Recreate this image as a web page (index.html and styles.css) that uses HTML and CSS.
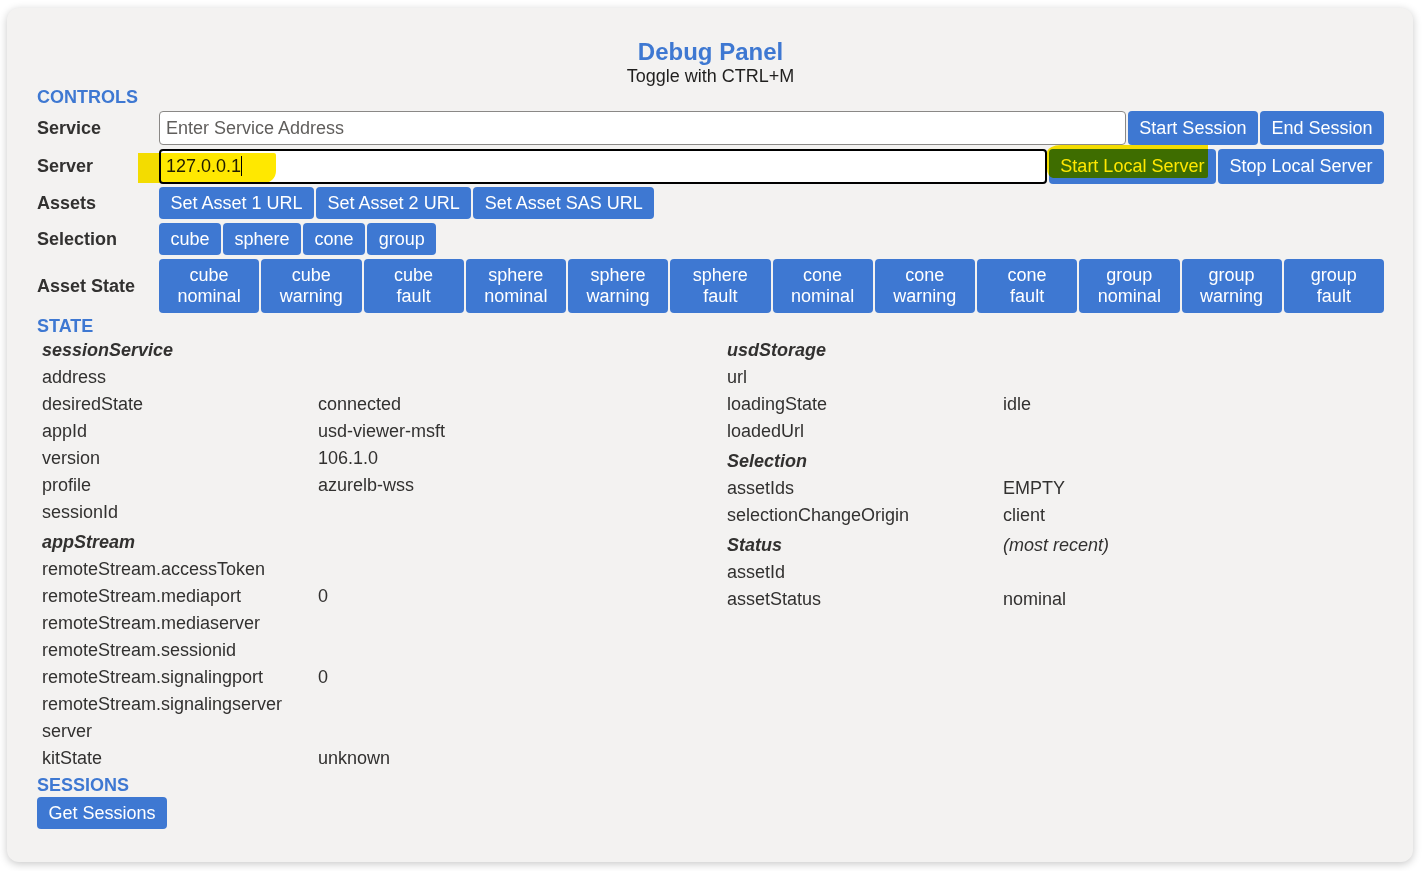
FILE: index.html
```html
<!DOCTYPE html>
<html lang="en">
<head>
<meta charset="utf-8">
<title>Debug Panel</title>
<link rel="stylesheet" href="styles.css">
</head>
<body>
<div class="panel">
  <div class="title">Debug Panel</div>
  <div class="subtitle">Toggle with CTRL+M</div>

  <div class="heading">CONTROLS</div>
  <div class="controls">
    <div class="label">Service</div>
    <div class="row tall">
      <input class="field" type="text" placeholder="Enter Service Address">
      <button class="btn">Start Session</button>
      <button class="btn">End Session</button>
    </div>

    <div class="label">Server</div>
    <div class="row annotated">
      <input class="field focused" type="text" value="127.0.0.1">
      <button class="btn">Start Local Server</button>
      <button class="btn">Stop Local Server</button>
      <span class="caret"></span>
      <span class="mark mark-input"></span>
      <span class="mark mark-button"></span>
    </div>

    <div class="label">Assets</div>
    <div class="row">
      <button class="btn">Set Asset 1 URL</button>
      <button class="btn">Set Asset 2 URL</button>
      <button class="btn">Set Asset SAS URL</button>
    </div>

    <div class="label">Selection</div>
    <div class="row">
      <button class="btn">cube</button>
      <button class="btn">sphere</button>
      <button class="btn">cone</button>
      <button class="btn">group</button>
    </div>

    <div class="label">Asset State</div>
    <div class="row states">
      <button class="btn two">cube<br>nominal</button>
      <button class="btn two">cube<br>warning</button>
      <button class="btn two">cube<br>fault</button>
      <button class="btn two">sphere<br>nominal</button>
      <button class="btn two">sphere<br>warning</button>
      <button class="btn two">sphere<br>fault</button>
      <button class="btn two">cone<br>nominal</button>
      <button class="btn two">cone<br>warning</button>
      <button class="btn two">cone<br>fault</button>
      <button class="btn two">group<br>nominal</button>
      <button class="btn two">group<br>warning</button>
      <button class="btn two">group<br>fault</button>
    </div>
  </div>

  <div class="heading flush">STATE</div>
  <div class="state">
    <div class="col">
      <div class="section">
        <div class="kv head"><span>sessionService</span><span></span></div>
        <div class="kv"><span>address</span><span></span></div>
        <div class="kv"><span>desiredState</span><span>connected</span></div>
        <div class="kv"><span>appId</span><span>usd-viewer-msft</span></div>
        <div class="kv"><span>version</span><span>106.1.0</span></div>
        <div class="kv"><span>profile</span><span>azurelb-wss</span></div>
        <div class="kv"><span>sessionId</span><span></span></div>
      </div>
      <div class="section">
        <div class="kv head"><span>appStream</span><span></span></div>
        <div class="kv"><span>remoteStream.accessToken</span><span></span></div>
        <div class="kv"><span>remoteStream.mediaport</span><span>0</span></div>
        <div class="kv"><span>remoteStream.mediaserver</span><span></span></div>
        <div class="kv"><span>remoteStream.sessionid</span><span></span></div>
        <div class="kv"><span>remoteStream.signalingport</span><span>0</span></div>
        <div class="kv"><span>remoteStream.signalingserver</span><span></span></div>
        <div class="kv"><span>server</span><span></span></div>
        <div class="kv"><span>kitState</span><span>unknown</span></div>
      </div>
    </div>
    <div class="col">
      <div class="section">
        <div class="kv head"><span>usdStorage</span><span></span></div>
        <div class="kv"><span>url</span><span></span></div>
        <div class="kv"><span>loadingState</span><span>idle</span></div>
        <div class="kv"><span>loadedUrl</span><span></span></div>
      </div>
      <div class="section">
        <div class="kv head"><span>Selection</span><span></span></div>
        <div class="kv"><span>assetIds</span><span>EMPTY</span></div>
        <div class="kv"><span>selectionChangeOrigin</span><span>client</span></div>
      </div>
      <div class="section">
        <div class="kv head"><span>Status</span><span class="note">(most recent)</span></div>
        <div class="kv"><span>assetId</span><span></span></div>
        <div class="kv"><span>assetStatus</span><span>nominal</span></div>
      </div>
    </div>
  </div>

  <div class="heading tight">SESSIONS</div>
  <div class="sessions">
    <button class="btn">Get Sessions</button>
  </div>
</div>
</body>
</html>
```

FILE: styles.css
```css
* {
  box-sizing: border-box;
}

html, body {
  margin: 0;
  padding: 0;
  background: #ffffff;
}

body {
  font-family: "Liberation Sans", Arial, sans-serif;
  font-size: 18px;
  color: #323130;
  padding: 8px 12px 10px 7px;
}

.panel {
  background: #f3f2f1;
  border-radius: 12px;
  box-shadow: 0 2px 8px rgba(0, 0, 0, 0.22);
  padding: 30px 29px 33px 30px;
}

.title {
  text-align: center;
  font-size: 24px;
  font-weight: bold;
  line-height: 28px;
  color: #3e78d2;
}

.subtitle {
  text-align: center;
  font-size: 18px;
  line-height: 21px;
  color: #201f1e;
}

.heading {
  font-size: 18px;
  font-weight: bold;
  line-height: 21px;
  color: #3e78d2;
  margin-bottom: 3px;
}

.heading.flush {
  margin-bottom: 0;
}

.heading.tight {
  margin-bottom: 1px;
}

.controls {
  display: grid;
  grid-template-columns: 122px 1fr;
  row-gap: 4px;
  margin-bottom: 3px;
}

.label {
  display: flex;
  align-items: center;
  font-weight: bold;
  color: #323130;
}

.row {
  display: flex;
  gap: 2px;
  height: 32px;
}

.row.tall {
  height: 34px;
}

.annotated {
  position: relative;
  height: 35px;
  margin-bottom: -1px;
}

.states {
  height: 54px;
}

.btn {
  font-family: "Liberation Sans", Arial, sans-serif;
  font-size: 18px;
  line-height: 21px;
  color: #ffffff;
  background: #3e78d2;
  border: none;
  border-radius: 4px;
  padding: 0 11.5px;
  white-space: nowrap;
  cursor: pointer;
}

.two {
  flex: 1 1 0;
  padding: 0 4px;
  line-height: 21px;
}

.field {
  flex: 1 1 auto;
  min-width: 0;
  font-family: "Liberation Sans", Arial, sans-serif;
  font-size: 18px;
  color: #201f1e;
  background: #ffffff;
  border: 1px solid #8a8886;
  border-radius: 4px;
  padding: 0 6px;
  outline: none;
}

.field::placeholder {
  color: #605e5c;
}

.focused {
  border: 2px solid #000000;
  padding: 0 5px;
}

.caret {
  position: absolute;
  left: 82px;
  top: 7px;
  width: 1px;
  height: 20px;
  background: #000000;
}

.mark {
  position: absolute;
  background: #ffe800;
  mix-blend-mode: multiply;
  pointer-events: none;
}

.mark-input {
  left: -21px;
  top: 4px;
  width: 138px;
  height: 30px;
  border-radius: 0 2px 12px 0;
}

.mark-button {
  left: 888px;
  top: -4px;
  width: 161px;
  height: 33px;
  border-radius: 14px 0 2px 6px / 8px 0 2px 10px;
}

.state {
  display: grid;
  grid-template-columns: 685px 1fr;
  margin-bottom: 3px;
}

.section + .section {
  margin-top: 3px;
}

.kv {
  display: grid;
  grid-template-columns: 276px 1fr;
  height: 27px;
  align-items: center;
  padding-left: 5px;
  color: #323130;
}

.head span:first-child {
  font-weight: bold;
  font-style: italic;
}

.note {
  font-style: italic;
}

.sessions {
  display: flex;
}

.sessions .btn {
  height: 32px;
}
```
